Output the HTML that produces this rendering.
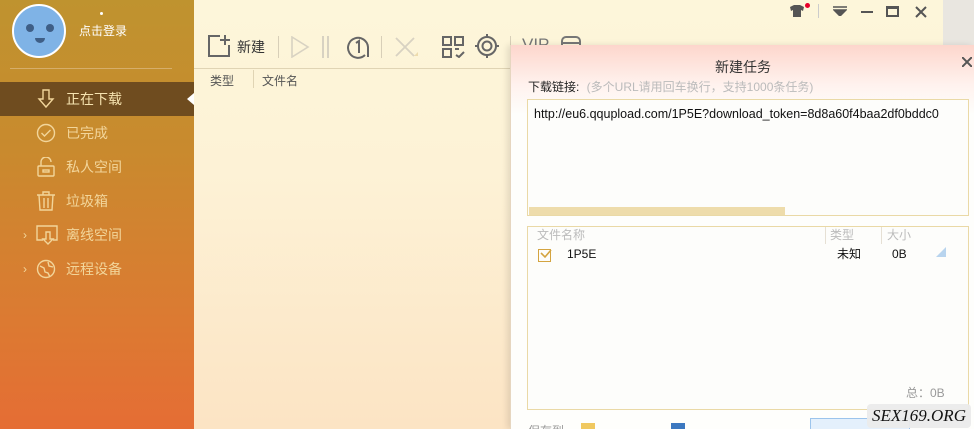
<!DOCTYPE html>
<html><head><meta charset="utf-8"><style>
*{margin:0;padding:0;box-sizing:border-box}
html,body{width:974px;height:429px;overflow:hidden}
body{position:relative;font-family:"Liberation Sans","Noto Sans CJK SC",sans-serif;background:#e9e6e0}
#side{position:absolute;left:0;top:0;width:194px;height:429px;background:linear-gradient(180deg,#bf932f 0%,#c98a2e 35%,#dc7a32 75%,#e56d34 100%)}
#main{position:absolute;left:194px;top:0;width:749px;height:429px;background:linear-gradient(180deg,#fdf6da 0%,#fdf2d6 40%,#fce4c4 100%)}
.av{position:absolute;left:12px;top:4px;width:54px;height:54px;border-radius:50%;background:#7fb3e6;border:2px solid #fff}
.eye{position:absolute;width:8px;height:8px;border-radius:50%;background:#3e5e86;top:18px}
.nav{position:absolute;left:0;width:194px;height:34px;color:#f2d59a;font-size:14px;line-height:34px;padding-left:66px}
.nav svg{position:absolute;left:36px;top:7px}
.sel{background:#6f4c1f;color:#f6e3b0}
.tb{position:absolute;top:34px}
#dlg{position:absolute;left:510px;top:45px;width:464px;height:384px;overflow:hidden;background:linear-gradient(180deg,#fdd6cc 0px,#fff2ee 40px,#fefefc 70px);border-left:1px solid #e6d6c0;box-shadow:-3px 0 6px rgba(0,0,0,.1)}
.box{position:absolute;border:1px solid #ead9a6;background:#fdfdfb}
.t{position:absolute;font-size:12px;line-height:16px;white-space:nowrap}
</style></head><body>
<div id="side">
 <div class="av"><div class="eye" style="left:12px"></div><div class="eye" style="left:32px"></div><div style="position:absolute;left:21px;top:32px;width:10px;height:5px;background:#3e5e86;border-radius:0 0 5px 5px"></div></div>
 <div style="position:absolute;left:100px;top:12px;width:3px;height:3px;background:#fff;border-radius:50%"></div>
 <div style="position:absolute;left:79px;top:22px;color:#fff;font-size:12px">点击登录</div>
 <div style="position:absolute;left:10px;top:68px;width:162px;height:1px;background:#d6ae6a"></div>
 <div class="nav sel" style="top:82px"><svg width="20" height="20" viewBox="0 0 20 20" fill="none" stroke="#f2d59a" stroke-width="1.4"><path d="M7 1v9H3l7 8 7-8h-4V1z"/></svg>正在下载</div>
 <div style="position:absolute;left:187px;top:93px;border:6px solid transparent;border-right:7px solid #fff;border-left:0"></div>
 <div class="nav" style="top:116px"><svg width="20" height="20" viewBox="0 0 20 20" fill="none" stroke="#f2d59a" stroke-width="1.4"><circle cx="10" cy="10" r="8.5"/><path d="M5.5 10l3 3 6-6"/></svg>已完成</div>
 <div class="nav" style="top:150px"><svg width="20" height="20" viewBox="0 0 20 20" fill="none" stroke="#f2d59a" stroke-width="1.4"><path d="M5 9V5a5 5 0 0 1 10 0"/><rect x="2" y="9" width="16" height="10" rx="1"/><rect x="7" y="13" width="6" height="2"/></svg>私人空间</div>
 <div class="nav" style="top:184px"><svg width="20" height="20" viewBox="0 0 20 20" fill="none" stroke="#f2d59a" stroke-width="1.4"><path d="M1 4h18M7 4V1h6v3M3 4l1 15h12l1-15M8 7v10M12 7v10"/></svg>垃圾箱</div>
 <div class="nav" style="top:218px"><span style="position:absolute;left:23px;top:0;font-size:12px">›</span><svg width="22" height="20" viewBox="0 0 22 20" fill="none" stroke="#f2d59a" stroke-width="1.4"><path d="M7 15H1V1h20v14h-4M10 7v7H7l5 5 5-5h-3V7z"/></svg>离线空间</div>
 <div class="nav" style="top:252px"><span style="position:absolute;left:23px;top:0;font-size:12px">›</span><svg width="20" height="20" viewBox="0 0 20 20" fill="none" stroke="#f2d59a" stroke-width="1.4"><circle cx="10" cy="10" r="8.5"/><path d="M4 7l4 2 1 4 3 1 2 4M12 3l1 4 4 1" /></svg>远程设备</div>
</div>
<div id="main">
 <svg class="tb" style="left:13px" width="24" height="24" viewBox="0 0 24 24" fill="none" stroke="#666" stroke-width="2"><path d="M13 2H2v20h20V11M18 1v10M13 6h10"/></svg>
 <div class="tb" style="left:43px;top:37px;font-size:14px;color:#333">新建</div>
 <div class="tb" style="left:84px;top:36px;width:1px;height:22px;background:#d8cfb8"></div>
 <svg class="tb" style="left:96px;top:36px" width="20" height="22" viewBox="0 0 20 22" fill="none" stroke="#d8d2c2" stroke-width="1.6"><path d="M2 1l16 10L2 21z"/></svg>
 <div class="tb" style="left:128px;top:36px;width:7px;height:22px;border-left:2px solid #d8d2c2;border-right:2px solid #d8d2c2"></div>
 <svg class="tb" style="left:152px;top:35px" width="24" height="24" viewBox="0 0 24 24" fill="none" stroke="#666" stroke-width="2"><path d="M19 20A10 10 0 1 1 22 12v10"/><path d="M10 8l3-2v12"/></svg>
 <div class="tb" style="left:187px;top:36px;width:1px;height:22px;background:#d8cfb8"></div>
 <svg class="tb" style="left:200px;top:36px" width="24" height="22" viewBox="0 0 24 22" fill="none" stroke="#d8d2c2" stroke-width="1.8"><path d="M2 2l18 18M20 2L2 20"/><path d="M20 20l4-4v4z" fill="#eedcae" stroke="none"/></svg>
 <svg class="tb" style="left:248px;top:36px" width="24" height="22" viewBox="0 0 24 22" fill="none" stroke="#666" stroke-width="2"><rect x="1" y="1" width="8" height="8"/><rect x="13" y="1" width="8" height="8"/><rect x="1" y="13" width="8" height="8"/><path d="M13 13h4M14 19l3 2 5-5"/></svg>
 <svg class="tb" style="left:281px;top:34px" width="24" height="24" viewBox="0 0 24 24" fill="none" stroke="#666" stroke-width="2"><circle cx="12" cy="12" r="9"/><circle cx="12" cy="12" r="4.5"/><path d="M12 0v3M12 21v3M0 12h3M21 12h3"/></svg>
 <div class="tb" style="left:316px;top:36px;width:1px;height:22px;background:#d8cfb8"></div>
 <div class="tb" style="left:328px;top:35px;font-size:17px;color:#777">VIP</div>
 <svg class="tb" style="left:366px;top:35px" width="22" height="12" viewBox="0 0 22 12" fill="none" stroke="#777" stroke-width="2"><path d="M2 11V6a4 4 0 0 1 4-4h10a4 4 0 0 1 4 4v5M2 8h18"/></svg>
 <div style="position:absolute;left:0;top:68px;width:749px;height:1px;background:#e0d4b4"></div>
 <div style="position:absolute;left:16px;top:72px;font-size:12px;color:#555">类型</div>
 <div style="position:absolute;left:59px;top:70px;width:1px;height:18px;background:#e0d4b4"></div>
 <div style="position:absolute;left:68px;top:72px;font-size:12px;color:#555">文件名</div>
 <svg style="position:absolute;left:596px;top:5px" width="14" height="12" viewBox="0 0 14 12"><path d="M0 2l4-2h6l4 2-1 4-2-1v7H3V5L1 6z" fill="#555"/></svg>
 <div style="position:absolute;left:611px;top:3px;width:5px;height:5px;border-radius:50%;background:#e8002a"></div>
 <div style="position:absolute;left:624px;top:4px;width:1px;height:14px;background:#ccc"></div>
 <svg style="position:absolute;left:639px;top:6px" width="14" height="10" viewBox="0 0 14 10"><path d="M0 1h14M1 4h12L7 10z" fill="#555" stroke="#555" stroke-width="1.5"/></svg>
 <div style="position:absolute;left:667px;top:11px;width:12px;height:2px;background:#555"></div>
 <div style="position:absolute;left:692px;top:6px;width:13px;height:11px;border:2px solid #555;border-top-width:3px"></div>
 <svg style="position:absolute;left:721px;top:6px" width="12" height="12" viewBox="0 0 12 12" stroke="#555" stroke-width="2"><path d="M1 1l10 10M11 1L1 11"/></svg>
</div>
<div id="dlg">
 <div style="position:absolute;left:0;width:464px;top:12px;text-align:center;font-size:14px;color:#333">新建任务</div>
 <svg style="position:absolute;left:451px;top:12px" width="10" height="10" viewBox="0 0 10 10" stroke="#555" stroke-width="2"><path d="M0 0l10 10M10 0L0 10"/></svg>
 <div class="t" style="left:17px;top:34px;color:#222">下载链接: <span style="color:#bbb;margin-left:4px">(多个URL请用回车换行，支持1000条任务)</span></div>
 <div class="box" style="left:16px;top:54px;width:442px;height:117px">
  <div style="position:absolute;left:6px;top:7px;font-size:12.5px;color:#111;white-space:nowrap;width:434px;overflow:hidden">http://eu6.qqupload.com/1P5E?download_token=8d8a60f4baa2df0bddc0</div>
  <div style="position:absolute;left:1px;top:107px;width:256px;height:8px;background:#eedcab"></div>
 </div>
 <div class="box" style="left:16px;top:181px;width:442px;height:184px">
  <div class="t" style="left:9px;top:0;color:#bbb">文件名称</div>
  <div style="position:absolute;left:297px;top:0;width:1px;height:17px;background:#e6e0d4"></div>
  <div class="t" style="left:302px;top:0;color:#bbb">类型</div>
  <div style="position:absolute;left:353px;top:0;width:1px;height:17px;background:#e6e0d4"></div>
  <div class="t" style="left:359px;top:0;color:#bbb">大小</div>
  <div style="position:absolute;left:10px;top:22px;width:13px;height:13px;border:1.5px solid #d4a440"></div>
  <svg style="position:absolute;left:12px;top:22px" width="12" height="10" viewBox="0 0 12 10" fill="none" stroke="#d4a440" stroke-width="1.6"><path d="M1 4l4 4 6-7"/></svg>
  <div class="t" style="left:39px;top:19px;color:#111">1P5E</div>
  <div class="t" style="left:309px;top:19px;color:#111">未知</div>
  <div class="t" style="left:364px;top:19px;color:#111">0B</div>
  <div style="position:absolute;left:408px;top:20px;border:5px solid transparent;border-right-color:#b8d4ee;border-bottom-color:#b8d4ee"></div>
  <div class="t" style="left:378px;top:158px;color:#999">总：0B</div>
 </div>
 <div class="t" style="left:17px;top:378px;color:#999">保存到</div>
 <div style="position:absolute;left:70px;top:378px;width:14px;height:10px;background:#f0c860"></div>
 <div style="position:absolute;left:160px;top:378px;width:14px;height:10px;background:#3c78c0"></div>
 <div style="position:absolute;left:299px;top:373px;width:100px;height:14px;border:1px solid #9cc4ec;background:#e4f0fc"></div>
</div>
<div style="position:absolute;left:867px;top:404px;width:104px;height:24px;background:rgba(235,235,235,.95);border-radius:4px;font-family:'Liberation Serif',serif;font-style:italic;font-size:17px;color:#111;text-align:center;line-height:24px">SEX169.ORG</div>
</body></html>
